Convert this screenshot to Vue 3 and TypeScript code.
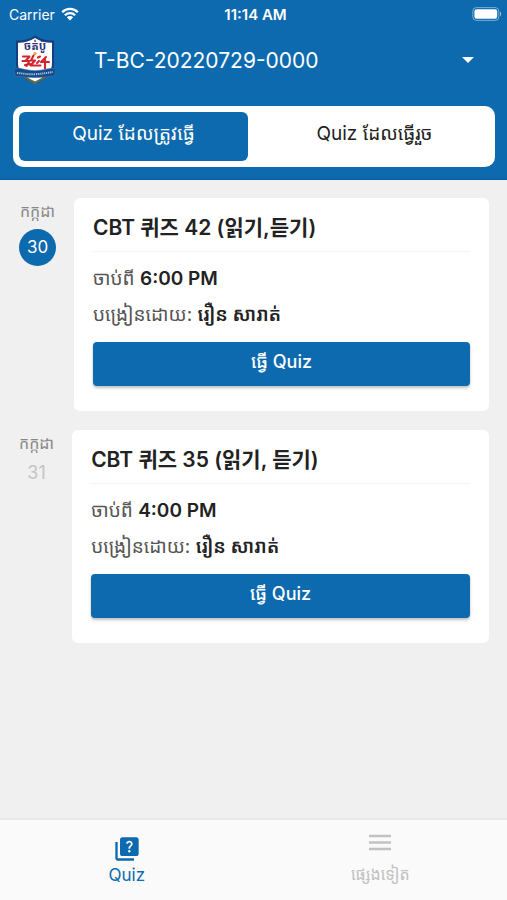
<script setup lang="ts">
import { ref } from 'vue'

interface Quiz {
  id: number
  month: string
  day: number
  today: boolean
  title: string
  time: string
  teacher: string
}

const classes: string[] = ['T-BC-20220729-0000']
const selectedClass = ref<string>(classes[0])

const tabs: string[] = ['Quiz ដែលត្រូវធ្វើ', 'Quiz ដែលធ្វើរួច']
const activeTab = ref<number>(0)

const quizzes: Quiz[] = [
  { id: 42, month: 'កក្កដា', day: 30, today: true, title: 'CBT 퀴즈 42 (읽기,듣기)', time: '6:00 PM', teacher: 'រឿន សារាត់' },
  { id: 35, month: 'កក្កដា', day: 31, today: false, title: 'CBT 퀴즈 35 (읽기, 듣기)', time: '4:00 PM', teacher: 'រឿន សារាត់' },
]
</script>

<template>
  <div class="screen">
    <header class="header">
      <div class="status">
        <div class="carrier">
          <span>Carrier</span>
          <svg class="wifi" viewBox="0 0 18 14" aria-hidden="true">
            <path d="M1.2 5.2a11 11 0 0 1 15.6 0M3.9 8.2a7.2 7.2 0 0 1 10.2 0" fill="none" stroke="#fff" stroke-width="2.3" />
            <path d="M9 13.6 5.8 10.3a4.6 4.6 0 0 1 6.4 0z" fill="#fff" />
          </svg>
        </div>
        <strong class="clock">11:14 AM</strong>
        <svg class="battery" viewBox="0 0 30 14" aria-hidden="true">
          <rect x=".8" y=".6" width="26" height="12.8" rx="3.6" fill="none" stroke="#fff" stroke-opacity=".45" />
          <rect x="2.4" y="2.2" width="22.8" height="9.6" rx="2.2" fill="#fff" />
          <path d="M28 4.8c1.6.6 1.6 3.8 0 4.4z" fill="#fff" fill-opacity=".55" />
        </svg>
      </div>

      <div class="class-row">
        <svg class="logo" viewBox="0 0 44 50" role="img" aria-label="School emblem">
          <path d="M22 .5c5 3.600 12 5.400 19 5V29c0 9-9 15.500-19 20.500C12 44.500 3 38 3 29V5.500c7 .4 14-1.400 19-5z" fill="#183c7c" />
          <path d="M22 3c5 3 10.500 4.800 17 4.700V29c0 8-8 13.500-17 18C13 42.500 5 37 5 29V7.700C11.500 7.800 17 6 22 3z" fill="#fff" />
          <path d="M8 40c3.500 3.500 8.500 6.500 14 9.500 5.500-3 10.500-6 14-9.500l-3-.5C30 42.500 26 44.500 22 46.500 18 44.500 14 42.500 11 39.500z" fill="#596c53" />
          <text x="22" y="15" class="logo-text">ចត់ប៉ូ</text>
          <circle cx="22" cy="18.600" r="1.600" fill="#e6a834" />
          <g fill="none" stroke="#d4242e" stroke-width="2.100" stroke-linecap="round" stroke-linejoin="round">
            <path d="M10 21.500h6.500l-4 4.500M9.500 26h7l-3 5M12 30l5-1M20.500 20.500l-2.500 5h4l-4.500 5h10M25 22.500l2-1M26 26l-2 2M33 22l-5 5h8M32 24.500v9" />
          </g>
          <path d="M1 34c4-1.500 7-.5 11 .5 7 1.500 13 1.500 20 0 4-1 7-1.500 11-.5l-1.500 7c-5 .2-10 1.500-19.500 1.500S7 41 2 41z" fill="#154b8b" stroke="#3f74ab" stroke-width=".6" />
          <path d="M4 38c6 .5 11 1.500 18 1.200S33 38 40 37" fill="none" stroke="#b4cbe2" stroke-width="2" stroke-dasharray="1.200 .9" />
        </svg>
        <label class="picker">
          <select v-model="selectedClass" aria-label="Class">
            <option v-for="name in classes" :key="name" :value="name">{{ name }}</option>
          </select>
          <svg class="caret" viewBox="0 0 12 6" aria-hidden="true"><path d="M0 0h12L6 6z" fill="#fff" /></svg>
        </label>
      </div>

      <div class="tabs" role="tablist">
        <button
          v-for="(tab, index) in tabs"
          :key="tab"
          type="button"
          role="tab"
          class="tab"
          :class="{ active: activeTab === index }"
          :aria-selected="activeTab === index"
          @click="activeTab = index"
        >{{ tab }}</button>
      </div>
    </header>

    <main class="list">
      <article v-for="quiz in quizzes" :key="quiz.id" class="entry">
        <div class="date">
          <span class="month">{{ quiz.month }}</span>
          <span class="day" :class="{ today: quiz.today }">{{ quiz.day }}</span>
        </div>
        <section class="card">
          <h2 class="title">{{ quiz.title }}</h2>
          <p class="line">ចាប់ពី <strong>{{ quiz.time }}</strong></p>
          <p class="line">បង្រៀនដោយ: <strong>{{ quiz.teacher }}</strong></p>
          <button type="button" class="start">ធ្វើ Quiz</button>
        </section>
      </article>
    </main>

    <nav class="bottom">
      <a href="#quiz" class="nav-item current" aria-current="page">
        <svg class="nav-icon" viewBox="0 0 24 24" aria-hidden="true">
          <path d="M4 6H2v14c0 1.100.9 2 2 2h14v-2H4V6z" fill="currentColor" />
          <path fill-rule="evenodd" d="M20 2H8c-1.100 0-2 .9-2 2v12c0 1.100.9 2 2 2h12c1.100 0 2-.9 2-2V4c0-1.100-.9-2-2-2zm-5.990 13c-.59 0-1.050-.47-1.050-1.050 0-.59.47-1.040 1.050-1.040.59 0 1.040.45 1.040 1.040-.01.58-.45 1.050-1.040 1.050zm2.500-6.170c-.63.93-1.230 1.210-1.560 1.810-.13.24-.18.4-.18 1.180h-1.520c0-.41-.06-1.080.26-1.650.41-.73 1.180-1.160 1.630-1.800.48-.68.21-1.940-1.140-1.940-.88 0-1.320.67-1.500 1.230l-1.370-.57C11.510 5.960 12.520 5 13.990 5c1.230 0 2.080.56 2.510 1.260.37.6.58 1.730.01 2.570z" fill="currentColor" />
        </svg>
        <span>Quiz</span>
      </a>
      <a href="#more" class="nav-item more">
        <svg class="nav-icon" viewBox="0 0 28 28" aria-hidden="true">
          <path d="M3 6h22M3 12.500h22M3 19h22" fill="none" stroke="currentColor" stroke-width="2.500" />
        </svg>
        <span>ផ្សេងទៀត</span>
      </a>
    </nav>
  </div>
</template>

<style>
body {
  margin: 0;
  background: #f0f0f0;
}
</style>

<style scoped>
* {
  box-sizing: border-box;
}

.screen {
  --blue: #0d6aae;
  display: flex;
  flex-direction: column;
  min-height: 100vh;
  background: #f0f0f0;
  color: #222;
  font-family: Inter, "Noto Sans Khmer", "Khmer OS", "Noto Sans CJK KR", sans-serif;
}

button,
select {
  font-family: inherit;
}

.header {
  padding: 0 12px 12px 13px;
  background: var(--blue);
  color: #fff;
  border-bottom: 1px solid #0a5c9c;
}

.status {
  display: grid;
  grid-template-columns: 1fr auto 1fr;
  align-items: center;
  height: 28px;
  margin: 0 -7px 0 -4px;
  font-size: 14px;
}

.carrier {
  display: flex;
  align-items: center;
  gap: 6px;
}

.wifi {
  width: 18px;
  height: 14px;
}

.clock {
  font-size: 15px;
  font-weight: 600;
}

.battery {
  justify-self: end;
  width: 30px;
  height: 14px;
}

.class-row {
  display: flex;
  align-items: center;
  height: 64px;
}

.logo {
  flex: none;
  width: 44px;
  height: 50px;
}

.logo-text {
  font-size: 11px;
  font-weight: 700;
  text-anchor: middle;
  fill: #2b2f7c;
}

.picker {
  flex: 1;
  display: flex;
  align-items: center;
  margin-left: 37px;
  padding-right: 21px;
}

.picker select {
  flex: 1;
  height: 40px;
  padding: 0;
  border: 0;
  background: transparent;
  color: #fff;
  font-size: 21px;
  appearance: none;
}

.caret {
  width: 12px;
  height: 6px;
}

.tabs {
  display: flex;
  gap: 12px;
  margin-top: 14px;
  padding: 6px;
  border-radius: 10px;
  background: #fff;
}

.tab {
  flex: 1;
  height: 49px;
  padding: 0 0 8px;
  border: 0;
  border-radius: 6px;
  background: transparent;
  color: #222;
  font-size: 19px;
  white-space: nowrap;
}

.tab.active {
  background: var(--blue);
  color: #fff;
}

.list {
  flex: 1;
  display: flex;
  flex-direction: column;
  gap: 19px;
  padding: 18px 18px 18px 19px;
}

.entry {
  display: flex;
  gap: 18px;
}

.date {
  display: flex;
  flex-direction: column;
  align-items: center;
  min-width: 35px;
}

.month {
  height: 31px;
  color: #888;
  font-size: 16px;
  line-height: 26px;
}

.day {
  color: #c4c4c4;
  font-size: 18px;
  line-height: 24px;
}

.day.today {
  width: 37px;
  height: 37px;
  border-radius: 50%;
  background: var(--blue);
  color: #fff;
  font-size: 17px;
  line-height: 36px;
  text-align: center;
}

.card {
  flex: 1;
  padding: 10px 19px 25px;
  border-radius: 6px;
  background: #fff;
}

.title {
  height: 44px;
  margin: 0 0 9px;
  border-bottom: 1px solid #f4f4f4;
  font-size: 21px;
  font-weight: 600;
  line-height: 40px;
}

.line {
  height: 36px;
  margin: 0;
  color: #555;
  font-size: 19px;
  line-height: 36px;
  white-space: nowrap;
}

.line strong {
  color: #222;
  font-weight: 600;
}

.start {
  display: block;
  width: 100%;
  height: 44px;
  margin-top: 9px;
  padding: 0 0 6px;
  border: 0;
  border-radius: 4px;
  background: var(--blue);
  box-shadow: 0 2px 3px rgb(0 0 0 / 25%);
  color: #fff;
  font-size: 18px;
  font-weight: 500;
}

.bottom {
  display: flex;
  height: 82px;
  border-top: 2px solid #e9e9e9;
  background: #fafafa;
}

.nav-item {
  flex: 1;
  display: flex;
  flex-direction: column;
  align-items: center;
  padding-top: 15px;
  color: #c2c2c2;
  font-size: 17px;
  line-height: 24px;
  text-decoration: none;
}

.nav-item.current {
  color: var(--blue);
}

.nav-icon {
  width: 28px;
  height: 28px;
}

.more {
  padding-top: 10px;
  font-size: 16px;
  line-height: 32px;
}
</style>
